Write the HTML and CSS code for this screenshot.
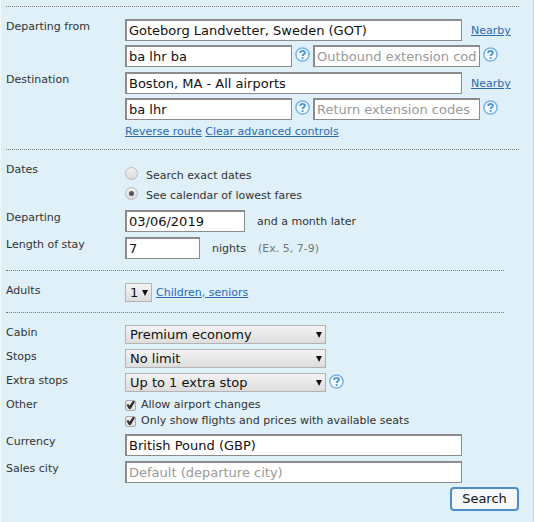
FILE: index.html
```
<!DOCTYPE html>
<html lang="en">
<head>
	<meta charset="utf-8">
	<title>Flight search</title>
	<link rel="stylesheet" href="styles.css">
</head>
<body>
<svg class="defs" width="0" height="0">
	<symbol id="help" viewBox="0 0 15 15">
		<circle cx="7.5" cy="7.5" r="6.6" fill="#f6fbff" stroke="#78b2e6" stroke-width="1.5"/>
		<path d="M5.2 6 C5.2 3.3 9.9 3.2 9.9 5.8 C9.9 7.3 7.6 7.3 7.6 9" fill="none" stroke="#4592dc" stroke-width="1.9"/>
		<circle cx="7.6" cy="11" r="1.1" fill="#4592dc"/>
	</symbol>
</svg>
<form class="search" action="#">
	<section class="route">
		<div class="row">
			<label for="from">Departing from</label>
			<div class="fields">
				<div class="line"><input class="text wide" id="from" type="text" value="Goteborg Landvetter, Sweden (GOT)"><a class="nearby" href="#">Nearby</a></div>
				<div class="line codes">
					<input class="text code" type="text" value="ba lhr ba" aria-label="Outbound routing codes">
					<a class="help" href="#" aria-label="Help"><svg><use href="#help"/></svg></a>
					<input class="text code" type="text" placeholder="Outbound extension codes" aria-label="Outbound extension codes">
					<a class="help" href="#" aria-label="Help"><svg><use href="#help"/></svg></a>
				</div>
			</div>
		</div>
		<div class="row">
			<label for="to">Destination</label>
			<div class="fields">
				<div class="line"><input class="text wide" id="to" type="text" value="Boston, MA - All airports"><a class="nearby" href="#">Nearby</a></div>
				<div class="line codes">
					<input class="text code" type="text" value="ba lhr" aria-label="Return routing codes">
					<a class="help" href="#" aria-label="Help"><svg><use href="#help"/></svg></a>
					<input class="text code" type="text" placeholder="Return extension codes" aria-label="Return extension codes">
					<a class="help" href="#" aria-label="Help"><svg><use href="#help"/></svg></a>
				</div>
				<div class="links"><a href="#">Reverse route</a> <a href="#">Clear advanced controls</a></div>
			</div>
		</div>
	</section>

	<section class="dates">
		<div class="row" role="radiogroup" aria-labelledby="dates">
			<span class="name" id="dates">Dates</span>
			<div class="radios">
				<label><input type="radio" name="mode">Search exact dates</label>
				<label><input type="radio" name="mode" checked>See calendar of lowest fares</label>
			</div>
		</div>
		<div class="row">
			<label for="depart">Departing</label>
			<div class="line"><input class="text date" id="depart" type="text" value="03/06/2019"><span class="after">and a month later</span></div>
		</div>
		<div class="row">
			<label for="stay">Length of stay</label>
			<div class="line"><input class="text stay" id="stay" type="text" value="7"><span class="after">nights</span><span class="hint after">(Ex. 5, 7-9)</span></div>
		</div>
	</section>

	<section class="people short">
		<div class="row">
			<label for="adults">Adults</label>
			<div class="line"><span class="select small"><select id="adults"><option>1</option><option>2</option><option>3</option></select></span><a class="children" href="#">Children, seniors</a></div>
		</div>
	</section>

	<section class="options short">
		<div class="row">
			<label for="cabin">Cabin</label>
			<div class="line"><span class="select"><select id="cabin"><option>Premium economy</option></select></span></div>
		</div>
		<div class="row">
			<label for="stops">Stops</label>
			<div class="line"><span class="select"><select id="stops"><option>No limit</option></select></span></div>
		</div>
		<div class="row">
			<label for="extra">Extra stops</label>
			<div class="line"><span class="select"><select id="extra"><option>Up to 1 extra stop</option></select></span><a class="help" href="#" aria-label="Help"><svg><use href="#help"/></svg></a></div>
		</div>
		<div class="row" role="group" aria-labelledby="other">
			<span class="name" id="other">Other</span>
			<div class="checks">
				<label><input type="checkbox" checked>Allow airport changes</label>
				<label><input type="checkbox" checked>Only show flights and prices with available seats</label>
			</div>
		</div>
		<div class="row">
			<label for="currency">Currency</label>
			<div class="line"><input class="text wide" id="currency" type="text" value="British Pound (GBP)"></div>
		</div>
		<div class="row">
			<label for="city">Sales city</label>
			<div class="line"><input class="text wide" id="city" type="text" placeholder="Default (departure city)"></div>
		</div>
	</section>
	<div class="submit"><button type="submit">Search</button></div>
</form>
</body>
</html>
```
FILE: styles.css
```
* {box-sizing: border-box;}
body {margin: 0; background: #dff0f9; color: #333; font: 11px/16px Verdana, "DejaVu Sans", sans-serif;}
input, select, button {font: 13px/18px Verdana, "DejaVu Sans", sans-serif; color: #111; margin: 0;}
a {color: #2a6ab5;}
.defs {position: absolute;}

.search {padding: 6px 14px 12px 5px; border-left: 1px solid #f2f9fd; border-right: 1px solid #b5d3e6;}
section {border-top: 1px dotted #777; display: flex; flex-direction: column; gap: 5px;}
.short {margin-right: 15px;}
.route {padding: 12px 0 9px;}
.dates {padding: 12px 0 11px;}
.people {padding: 12px 0 10px;}
.options {padding: 12px 0 0;}

.row {display: grid; grid-template-columns: 119px 1fr;}
.fields {display: flex; flex-direction: column; gap: 4px;}
.line {display: flex; align-items: center;}
.text {height: 22px; padding: 0 2px; border: 2px solid #8c8c8c; border-right-width: 1px; border-bottom-width: 1px; background: #fff; border-radius: 0;}
.text::placeholder {color: #999; opacity: 1;}
.wide {width: 337px;}
.code {width: 167px;}
.date {width: 120px;}
.stay {width: 75px;}
.nearby {margin-left: 9px; padding-top: 2px;}
.codes {gap: 3px;}
.help {padding-bottom: 3px;}
.help svg {display: block; width: 15px; height: 15px;}
.line > .select + .help {margin-left: 3px;}
.after {margin-left: 12px; padding-top: 2px;}
.hint {color: #777;}

.radios {display: flex; flex-direction: column; gap: 3px; padding: 5px 0 1px;}
.radios label, .checks label {display: flex; align-items: center;}
.radios input {appearance: none; width: 13px; height: 13px; margin: 0 8px 4px 0; border: 1px solid #bbb; border-radius: 50%; background: linear-gradient(#eee, #ddd);}
.radios input:checked::before {content: ""; display: block; width: 5px; height: 5px; margin: 3px; border-radius: 50%; background: #555;}
.checks input {appearance: none; width: 11px; height: 11px; margin: 0 5px 0 0; border: 1px solid #aaa; border-radius: 2px; background: linear-gradient(#eee, #ddd);}
.checks input:checked::before {content: ""; display: block; width: 9px; height: 9px; background: #333; clip-path: polygon(5% 50%, 25% 38%, 40% 58%, 78% 0, 100% 15%, 52% 95%, 33% 95%);}

.select {position: relative; width: 201px; height: 19px;}
.select select {appearance: none; display: block; width: 100%; height: 100%; padding: 0 4px; line-height: 17px; border: 1px solid #b3b3b3; border-radius: 0; background: linear-gradient(#f3f3f3, #ddd);}
.select::after {content: ""; position: absolute; right: 4px; top: 7px; width: 6px; height: 6px; background: #111; clip-path: polygon(0 0, 100% 0, 50% 100%); pointer-events: none;}
.small {width: 27px;}
.children {margin-left: 4px;}

.submit {text-align: right; margin-top: 4px;}
button {height: 24px; width: 69px; padding: 0; border: 2px solid #4c8dcc; border-radius: 4px; background: #f5f9fd;}
```
